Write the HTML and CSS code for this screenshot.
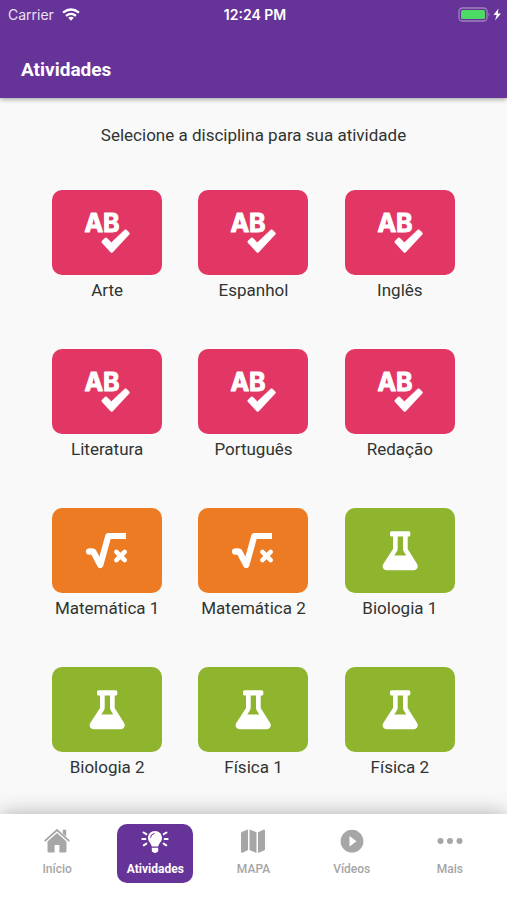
FILE: index.html
```html
<!DOCTYPE html>
<html lang="pt-BR">
<head>
<meta charset="utf-8">
<meta name="viewport" content="width=device-width, initial-scale=1">
<title>Atividades</title>
<link rel="stylesheet" href="styles.css">
</head>
<body>
<svg class="defs" aria-hidden="true">
  <symbol id="check" viewBox="0 0 48 48">
    <path d="M19.300 31.800 22 29.200Q23 28.300 24 29.300L28.300 33.700 41.500 21.200Q42.600 20.200 43.600 21.200L46 23.500Q47 24.500 46 25.500L29.800 42.900Q28.600 44.100 27.500 42.900L19.300 34Q18.200 32.900 19.300 31.800Z" fill="currentColor" stroke="currentColor" stroke-width="0.600"/>
  </symbol>
  <symbol id="root" viewBox="0 0 48 48">
    <g fill="none" stroke="currentColor" stroke-linejoin="round">
      <path d="M6 24.500H10.200L17.300 38 25.300 9H43" stroke-width="6.200"/>
      <path d="M6 24.500H8" stroke-width="6.200" stroke-linecap="round"/>
      <path d="M33.400 24.900 41.700 33.100M41.700 24.900 33.400 33.100" stroke-width="4.600" stroke-linecap="round"/>
    </g>
  </symbol>
  <symbol id="flask" viewBox="0 0 48 48">
    <path fill="currentColor" fill-rule="evenodd" d="M15.500 4.200H32.800Q34.300 4.200 34.300 5.700V8Q34.300 9.500 32.800 9.500H31.700V22L40.800 36.500Q43 40 40.300 42.300 39.300 43.200 37.500 43.200H11Q9 43.200 8 42.300 5.400 40 7.600 36.500L17 22V9.500H15.500Q14 9.500 14 8V5.700Q14 4.200 15.500 4.200ZM21.700 9.500V21.500Q21.700 23 21 24.200L18.300 28.500H30.300L27.600 24.200Q27 23 27 21.500V9.500Z"/>
  </symbol>
</svg>

<header class="header">
  <div class="status">
    <div class="carrier">
      <span>Carrier</span>
      <svg class="wifi" viewBox="0 0 18 13" aria-hidden="true">
        <g fill="none" stroke="currentColor" stroke-width="2.200"><path d="M1 4.700Q9-1.700 17 4.700"/><path d="M4 7.900Q9 3.800 14 7.900"/></g>
        <path fill="currentColor" d="M6.200 9.800Q9 7.700 11.800 9.800L9 12.700Z"/>
      </svg>
    </div>
    <time class="clock">12:24 PM</time>
    <div class="power">
      <svg class="battery" viewBox="0 0 44 15" aria-hidden="true">
        <rect x="1" y="1" width="28" height="13" rx="3.500" fill="none" stroke="#a283c0" stroke-width="1.300"/>
        <rect x="3" y="3" width="24" height="9" rx="1.500" fill="#4cd964"/>
        <path d="M30.500 5.500Q32.500 7.500 30.500 9.500Z" fill="#a283c0"/>
        <path d="M40.500 1.500 35.500 8H38.700L37 13.500 43 6.500H39.800Z" fill="#fff"/>
      </svg>
    </div>
  </div>
  <h1 class="title">Atividades</h1>
</header>

<main class="main">
  <p class="prompt">Selecione a disciplina para sua atividade</p>
  <div class="grid">
    <a class="subject" href="#arte"><span class="tile pink"><svg viewBox="0 0 48 48" aria-hidden="true"><text class="letters" x="19" y="23">AB</text><use href="#check"/></svg></span><span>Arte</span></a>
    <a class="subject" href="#espanhol"><span class="tile pink"><svg viewBox="0 0 48 48" aria-hidden="true"><text class="letters" x="19" y="23">AB</text><use href="#check"/></svg></span><span>Espanhol</span></a>
    <a class="subject" href="#ingles"><span class="tile pink"><svg viewBox="0 0 48 48" aria-hidden="true"><text class="letters" x="19" y="23">AB</text><use href="#check"/></svg></span><span>Inglês</span></a>
    <a class="subject" href="#literatura"><span class="tile pink"><svg viewBox="0 0 48 48" aria-hidden="true"><text class="letters" x="19" y="23">AB</text><use href="#check"/></svg></span><span>Literatura</span></a>
    <a class="subject" href="#portugues"><span class="tile pink"><svg viewBox="0 0 48 48" aria-hidden="true"><text class="letters" x="19" y="23">AB</text><use href="#check"/></svg></span><span>Português</span></a>
    <a class="subject" href="#redacao"><span class="tile pink"><svg viewBox="0 0 48 48" aria-hidden="true"><text class="letters" x="19" y="23">AB</text><use href="#check"/></svg></span><span>Redação</span></a>
    <a class="subject" href="#matematica-1"><span class="tile orange"><svg aria-hidden="true"><use href="#root"/></svg></span><span>Matemática 1</span></a>
    <a class="subject" href="#matematica-2"><span class="tile orange"><svg aria-hidden="true"><use href="#root"/></svg></span><span>Matemática 2</span></a>
    <a class="subject" href="#biologia-1"><span class="tile green"><svg aria-hidden="true"><use href="#flask"/></svg></span><span>Biologia 1</span></a>
    <a class="subject" href="#biologia-2"><span class="tile green"><svg aria-hidden="true"><use href="#flask"/></svg></span><span>Biologia 2</span></a>
    <a class="subject" href="#fisica-1"><span class="tile green"><svg aria-hidden="true"><use href="#flask"/></svg></span><span>Física 1</span></a>
    <a class="subject" href="#fisica-2"><span class="tile green"><svg aria-hidden="true"><use href="#flask"/></svg></span><span>Física 2</span></a>
  </div>
</main>

<nav class="tabs">
  <a class="tab" href="#inicio">
    <svg viewBox="0 0 28 28" aria-hidden="true"><path d="M2.200 13.700 14 3 25.800 13.700" fill="none" stroke="currentColor" stroke-width="1.800" stroke-linecap="round"/><path fill="currentColor" d="M19.800 2.800H23.200V9.500L19.800 6.500ZM14 6 23.500 14.600V24Q23.500 25.500 22 25.500H16.400V18H11.600V25.500H6Q4.500 25.500 4.500 24V14.600Z"/></svg>
    <span>Início</span>
  </a>
  <a class="tab active" href="#atividades" aria-current="page">
    <svg viewBox="0 0 28 28" aria-hidden="true"><path fill="currentColor" d="M14 4C9.800 4 7 7 7 10.800 7 15 10.200 16 10.700 19.500H17.300C17.800 16 21 15 21 10.800 21 7 18.200 4 14 4ZM10.800 20.800H17.200V24Q17.200 24.800 16 25 15.500 26 14 26T12 25Q10.800 24.800 10.800 24Z"/><path d="M9.500 10.800Q9.700 7 13.500 6.500" fill="none" stroke="#663399"/><path d="M1.300 12H4.400M23.600 12H26.700M2.500 5.500 5.300 7.200M25.500 5.500 22.700 7.200M2.700 18.300 5.400 16.600M25.300 18.300 22.600 16.600" fill="none" stroke="currentColor" stroke-width="2" stroke-linecap="round"/></svg>
    <span>Atividades</span>
  </a>
  <a class="tab" href="#mapa">
    <svg viewBox="0 0 28 28" aria-hidden="true"><path fill="currentColor" d="M2 6.500Q2 5.300 3 4.800L9 2.500V23L3.500 25.700Q2 26.300 2 24.800ZM10.500 2.500 17.500 5.300V26L10.500 23ZM19 5.300 24.500 2.700Q26 2.200 26 3.700V22Q26 23 25 23.500L19 26Z"/></svg>
    <span>MAPA</span>
  </a>
  <a class="tab" href="#videos">
    <svg viewBox="0 0 28 28" aria-hidden="true"><path fill="currentColor" fill-rule="evenodd" d="M14 2.800A11.400 11.400 0 1 0 14 25.600 11.400 11.400 0 1 0 14 2.800ZM11.500 9 18.500 14.200 11.500 19.400Z"/></svg>
    <span>Vídeos</span>
  </a>
  <a class="tab" href="#mais">
    <svg viewBox="0 0 28 28" aria-hidden="true"><g fill="currentColor"><circle cx="4.500" cy="14" r="3"/><circle cx="14" cy="14" r="3"/><circle cx="23.500" cy="14" r="3"/></g></svg>
    <span>Mais</span>
  </a>
</nav>
</body>
</html>
```
FILE: styles.css
```css
* { box-sizing: border-box; }

html, body { height: 100%; }

body {
  margin: 0;
  display: flex;
  flex-direction: column;
  background: #f9f9f9;
  color: #2f3432;
  font-family: Roboto, "Liberation Sans", sans-serif;
}

a { color: inherit; text-decoration: none; }

.defs { position: absolute; width: 0; height: 0; }

.header {
  flex: none;
  background: #663399;
  color: #fff;
  padding-bottom: 16px;
  box-shadow: 0 1px 5px rgba(0, 0, 0, 0.4);
}

.status {
  display: grid;
  grid-template-columns: 1fr auto 1fr;
  align-items: center;
  height: 28px;
  padding: 0 5px 0 8px;
  font-family: Inter, sans-serif;
  font-size: 14px;
}

.carrier { display: flex; align-items: center; gap: 8px; color: #e9e0f1; }
.wifi { width: 18px; height: 13px; color: #fff; }
.clock { font-weight: 600; }
.power { display: flex; justify-content: flex-end; }
.battery { width: 44px; height: 15px; }

.title {
  margin: 0;
  padding: 30px 21px 0;
  font-size: 19px;
  line-height: 24px;
  font-weight: 700;
}

.main { flex: 1; min-height: 0; overflow: hidden; }

.prompt {
  margin: 0;
  padding: 27px 16px 0;
  text-align: center;
  font-size: 17px;
  line-height: 20px;
}

.grid {
  display: grid;
  grid-template-columns: repeat(3, 1fr);
  row-gap: 49px;
  padding: 45px 34px 0;
}

.subject {
  display: flex;
  flex-direction: column;
  align-items: center;
  gap: 5px;
  font-size: 17px;
  line-height: 20px;
}

.tile {
  display: flex;
  align-items: center;
  justify-content: center;
  width: 110px;
  height: 85px;
  border-radius: 10px;
  color: #fff;
}

.tile svg { width: 48px; height: 48px; }
.pink { background: #e23664; }
.orange { background: #ec7b23; }
.green { background: #8fb52e; }

.letters {
  font-family: Inter, sans-serif;
  font-size: 25px;
  font-weight: 700;
  text-anchor: middle;
  fill: currentColor;
  stroke: currentColor;
  stroke-width: 1;
  stroke-linejoin: round;
}

.tabs {
  flex: none;
  display: grid;
  grid-template-columns: repeat(5, 1fr);
  justify-items: center;
  padding: 10px 8px 17px;
  background: #fff;
  box-shadow: 0 0 20px rgba(0, 0, 0, 0.3);
  z-index: 1;
}

.tab {
  display: flex;
  flex-direction: column;
  align-items: center;
  gap: 6px;
  min-width: 76px;
  padding: 3px 8px 6px;
  border-radius: 10px;
  color: #a6a6a6;
  font-size: 12px;
  line-height: 16px;
  font-weight: 500;
}

.tab svg { width: 28px; height: 28px; }
.tab.active { background: #663399; color: #fff; font-weight: 700; }
```
